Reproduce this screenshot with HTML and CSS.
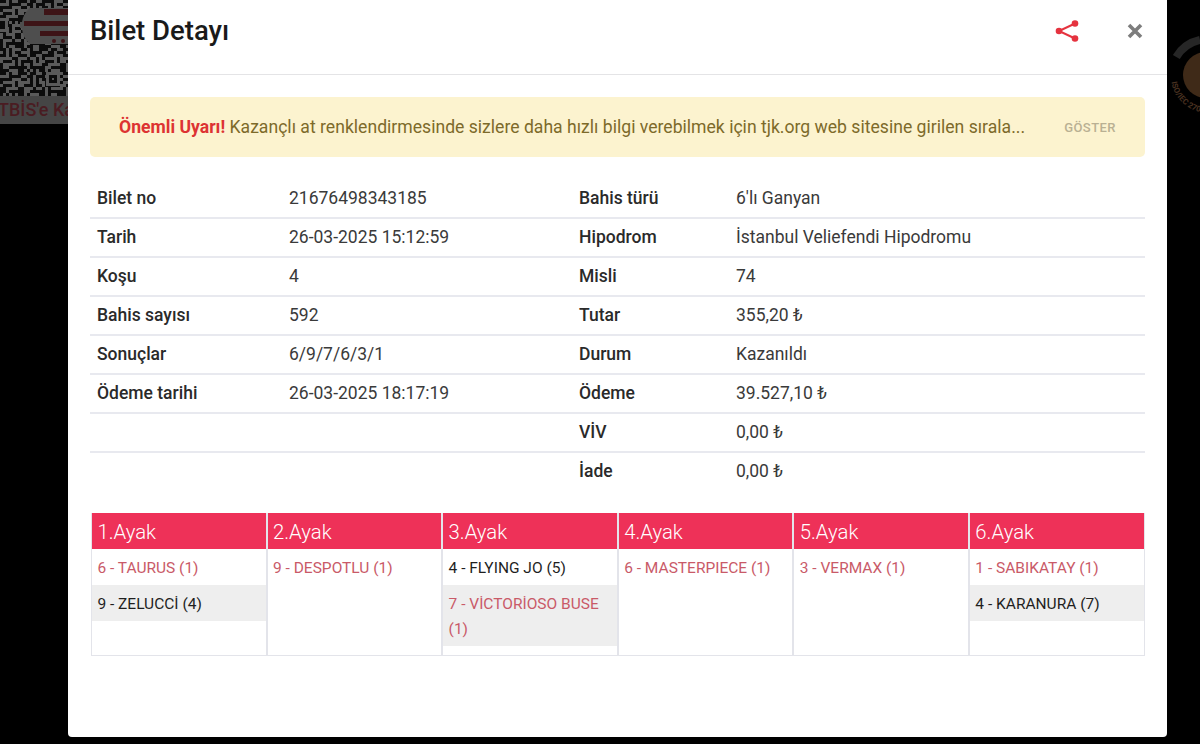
FILE: index.html
```html
<!DOCTYPE html>
<html lang="tr">
<head>
<meta charset="utf-8">
<title>Bilet Detayı</title>
<link rel="stylesheet" href="styles.css">
</head>
<body>
<div class="backdrop-qr">
  <svg class="qr-svg" width="68" height="96" viewBox="0 0 68 96">
    <defs>
      <pattern id="qrp" width="21" height="24" patternUnits="userSpaceOnUse">
        <rect width="21" height="24" fill="#5a5a5a"/>
        <path d="M0 0h6v3H0zM9 0h3v9H9zM15 3h6v3h-6zM0 6h6v3H0zM15 9h3v6h-3zM3 12h9v3H3zM0 15h3v9H0zM9 18h9v3H9zM18 18h3v6h-3zM6 21h3v3H6z" fill="#0c0c0c"/>
      </pattern>
      <pattern id="qrq" width="15" height="18" patternUnits="userSpaceOnUse">
        <path d="M3 0h3v3H3zM12 3h3v3h-3zM6 6h3v3H6zM0 9h3v3H0zM9 12h3v3H9zM3 15h3v3H3z" fill="#0c0c0c"/>
      </pattern>
    </defs>
    <rect width="68" height="96" fill="url(#qrp)"/>
    <rect width="68" height="96" fill="url(#qrq)"/>
    <path d="M30 8a22 22 0 0 0-8 14h-2v6h2a22 22 0 0 0 8 16h38V8z" fill="#4e4e4e"/>
    <path d="M44 9h24v6H44zM24 21h44v5H24zM40 31h28v5H40z" fill="#3d1417"/>
    <circle cx="54" cy="41" r="2" fill="#3d1417"/><circle cx="63" cy="41" r="2" fill="#3d1417"/>
    <path d="M46 72h14v14H46zM0 18h8v14H0z" fill="#5a5a5a"/>
    <path d="M49 75h8v8h-8zM0 21h5v8H0z" fill="#0c0c0c"/>
    <path d="M52 78h2v2h-2z" fill="#5a5a5a"/>
  </svg>
  <div class="qr-caption">TBİS'e Kay</div>
</div>
<svg class="backdrop-seal" width="33" height="110" viewBox="0 0 33 110">
  <defs><path id="sealLow" d="M4.500 60A37 37 0 0 0 33 90"/></defs>
  <path d="M9.300 35A37 37 0 0 1 33 18" fill="none" stroke="#262626" stroke-width="8"/>
  <circle cx="39" cy="53" r="23" fill="#3f2a18"/>
  <text class="seal-low"><textPath href="#sealLow">ISO/IEC 270</textPath></text>
</svg>
<main class="modal">
  <header class="modal-head">
    <h1 class="modal-title">Bilet Detayı</h1>
    <div class="modal-actions">
      <svg class="icon-share" width="24" height="24" viewBox="0 0 24 24">
        <path d="M20 4.500 4 12l16 7.500" fill="none" stroke="#e5333f" stroke-width="2"/>
        <circle cx="20" cy="4.500" r="3.300" fill="#e5333f"/>
        <circle cx="4" cy="12" r="3.300" fill="#e5333f"/>
        <circle cx="20" cy="19.500" r="3.300" fill="#e5333f"/>
      </svg>
      <svg class="icon-close" width="16" height="16" viewBox="0 0 16 16">
        <path d="M2 2l12 12M14 2 2 14" stroke="#7d7d7d" stroke-width="3.600" fill="none"/>
      </svg>
    </div>
  </header>
  <section class="modal-body">
    <div class="alert">
      <p class="alert-text"><strong>Önemli Uyarı!</strong> Kazançlı at renklendirmesinde sizlere daha hızlı bilgi verebilmek için tjk.org web sitesine girilen sırala...</p>
      <span class="alert-btn">GÖSTER</span>
    </div>
    <table class="details">
      <colgroup><col class="c1"><col class="c2"><col class="c3"><col class="c4"></colgroup>
      <tbody>
        <tr><th>Bilet no</th><td>21676498343185</td><th>Bahis türü</th><td>6'lı Ganyan</td></tr>
        <tr><th>Tarih</th><td>26-03-2025 15:12:59</td><th>Hipodrom</th><td>İstanbul Veliefendi Hipodromu</td></tr>
        <tr><th>Koşu</th><td>4</td><th>Misli</th><td>74</td></tr>
        <tr><th>Bahis sayısı</th><td>592</td><th>Tutar</th><td>355,20 ₺</td></tr>
        <tr><th>Sonuçlar</th><td>6/9/7/6/3/1</td><th>Durum</th><td>Kazanıldı</td></tr>
        <tr><th>Ödeme tarihi</th><td>26-03-2025 18:17:19</td><th>Ödeme</th><td>39.527,10 ₺</td></tr>
        <tr><th></th><td></td><th>VİV</th><td>0,00 ₺</td></tr>
        <tr><th></th><td></td><th>İade</th><td>0,00 ₺</td></tr>
      </tbody>
    </table>
    <div class="legs">
      <div class="leg">
        <div class="leg-head">1.Ayak</div>
        <div class="horse win">6 - TAURUS (1)</div>
        <div class="horse alt">9 - ZELUCCİ (4)</div>
      </div>
      <div class="leg">
        <div class="leg-head">2.Ayak</div>
        <div class="horse win">9 - DESPOTLU (1)</div>
      </div>
      <div class="leg">
        <div class="leg-head">3.Ayak</div>
        <div class="horse">4 - FLYING JO (5)</div>
        <div class="horse alt win">7 - VİCTORİOSO BUSE (1)</div>
      </div>
      <div class="leg">
        <div class="leg-head">4.Ayak</div>
        <div class="horse win">6 - MASTERPIECE (1)</div>
      </div>
      <div class="leg">
        <div class="leg-head">5.Ayak</div>
        <div class="horse win">3 - VERMAX (1)</div>
      </div>
      <div class="leg">
        <div class="leg-head">6.Ayak</div>
        <div class="horse win">1 - SABIKATAY (1)</div>
        <div class="horse alt">4 - KARANURA (7)</div>
      </div>
    </div>
  </section>
</main>
</body>
</html>
```
FILE: styles.css
```css
* { box-sizing: border-box; }
html, body { margin: 0; height: 744px; overflow: hidden; }
body { background: #000; font-family: Roboto, "Liberation Sans", sans-serif; color: #212121; position: relative; }

.backdrop-qr { position: absolute; left: 0; top: 0; width: 68px; height: 124px; background: #454545; overflow: hidden; }
.qr-svg { display: block; }
.qr-caption { font-size: 18px; font-weight: 500; color: #4a1c22; line-height: 28px; white-space: nowrap; margin-left: -2px; }
.backdrop-seal { position: absolute; left: 1167px; top: 22px; }
.seal-low { font-size: 8px; font-weight: 700; fill: #4a3220; }

.modal { position: absolute; left: 68px; top: 0; width: 1099px; height: 737px; background: #fff; border-radius: 0 0 4px 4px; }
.modal-head { height: 75px; border-bottom: 1px solid #e4e4e6; display: flex; align-items: center; justify-content: space-between; padding: 0 24px 12px 22px; }
.modal-title { margin: 0; font-size: 27.5px; font-weight: 500; color: #1a1a1a; line-height: 32px; }
.modal-actions { display: flex; align-items: center; gap: 48px; }
.icon-share, .icon-close { display: block; }

.modal-body { padding: 22px 22px 0; }
.alert { height: 60px; background: #fcf3cf; border-radius: 5px; display: flex; align-items: center; justify-content: space-between; padding: 0 29px; }
.alert-text { margin: 0; font-size: 17.6px; color: #7d6a2a; white-space: nowrap; }
.alert-text strong { color: #dd3333; font-weight: 700; }
.alert-btn { font-size: 13px; font-weight: 500; letter-spacing: .45px; color: #b9b093; }

.details { margin-top: 22px; width: 1055px; border-collapse: collapse; table-layout: fixed; font-size: 17.5px; }
.c1 { width: 192px; } .c2 { width: 290px; } .c3 { width: 157px; } .c4 { width: auto; }
.details tr { height: 39px; border-bottom: 2px solid #e8e9ef; }
.details tr:last-child { border-bottom-color: transparent; }
.details th { text-align: left; font-weight: 500; padding: 0 0 1px 7px; color: #2a2a2a; }
.details td { padding: 0 0 1px 7px; color: #3a3a3a; }

.legs { margin: 21px 0 0 1px; width: 1054px; height: 143px; display: grid; grid-template-columns: repeat(5, 175.6px) 1fr; border: 1px solid #e3e4ea; border-top: 0; }
.leg { border-right: 2px solid #e3e4ea; display: flex; flex-direction: column; }
.leg:last-child { border-right: 0; }
.leg-head { height: 36px; background: #ee3158; color: #fff; font-size: 20.3px; font-weight: 300; line-height: 38px; padding-left: 5.4px; }
.horse { font-size: 15.5px; line-height: 25px; padding: 7px 5.4px 4px; color: #1f1f1f; }
.horse.alt { background: #eeeeee; }
.horse.win { color: #c95a68; }
```
